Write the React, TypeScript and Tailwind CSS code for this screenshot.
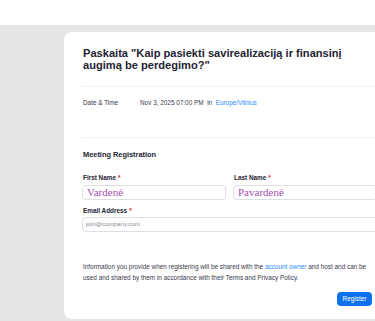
const SANS = "font-['Liberation_Sans',Arial,sans-serif]";

function Req() {
  return <span className="ml-[2px] text-[#e02828]">*</span>;
}

export default function App() {
  return (
    <div className={`h-[321px] w-[375px] overflow-hidden bg-[#e6e6e6] ${SANS}`}>
      {/* Top bar */}
      <div className="h-[25px] bg-white" />

      <div className="pl-[64px] pt-[7px]">
        <div className="h-[287px] w-[340px] rounded-l-[8px] bg-white pl-[18px] pt-[16px] pb-[13px]">
          {/* Title */}
          <div className="border-b border-[#f2f2f2] pb-[15px] pl-px">
            <h1 className="w-[290px] text-[11.1px] leading-[11.5px] font-bold text-[#232333]">
              Paskaita "Kaip pasiekti savirealizaciją ir finansinį augimą be perdegimo?"
            </h1>
          </div>

          {/* Date & Time */}
          <div className="h-[51px] border-b border-[#f2f2f2] pt-[11px] pl-px">
            <div className="flex text-[6.4px] leading-[10px] text-[#39394d]">
              <span className="w-[57px]">Date &amp; Time</span>
              <span>
                Nov 3, 2025 07:00 PM&nbsp; in&nbsp; <span className="text-[#2d8cff]">Europe/Vilnius</span>
              </span>
            </div>
          </div>

          {/* Meeting Registration */}
          <div className="pt-[12px] pl-px text-[7.4px] leading-[10px] font-bold text-[#232333]">
            Meeting Registration
          </div>

          <div className="mt-[13px] flex gap-[7px]">
            <div className="w-[144px] shrink-0">
              <div className="pl-px text-[6.4px] leading-[10px] font-bold text-[#232333]">
                First Name<Req />
              </div>
              <div className="mt-[1.5px] flex h-[15px] items-center rounded-[4px] border border-[#dfdfe3] px-[4px] font-['Liberation_Serif',serif] text-[11px] text-[#a64db3]">
                Vardenė
              </div>
            </div>
            <div className="w-[144px] shrink-0">
              <div className="pl-px text-[6.4px] leading-[10px] font-bold text-[#232333]">
                Last Name<Req />
              </div>
              <div className="mt-[1.5px] flex h-[15px] items-center rounded-[4px] border border-[#dfdfe3] px-[4px] font-['Liberation_Serif',serif] text-[11px] text-[#a64db3]">
                Pavardenė
              </div>
            </div>
          </div>

          <div className="mt-[6px] w-[300px]">
            <div className="pl-px text-[6.4px] leading-[10px] font-bold text-[#232333]">
              Email Address<Req />
            </div>
            <div className="mt-[1px] flex h-[15px] items-center rounded-[4px] border border-[#dfdfe3] px-[3px] text-[6.2px] text-[#8a8a96]">
              join@company.com
            </div>
          </div>

          {/* Disclaimer */}
          <p className="mt-[30.5px] w-[290px] pl-px text-[6.4px] leading-[10.8px] text-[#39394d]">
            <span>Information you provide when registering will be shared with the</span>{' '}
            <span className="text-[#2d8cff]">account owner</span> <span>and host and can be</span>{' '}
            <span>used and shared by them in accordance with their Terms and Privacy Policy.</span>
          </p>

          <div className="mt-[8.5px] flex w-[290px] justify-end">
            <button className="h-[14px] w-[35px] rounded-[4px] bg-[#0e71eb] text-[6.4px] leading-[14px] text-white">
              Register
            </button>
          </div>
        </div>
      </div>
    </div>
  );
}
